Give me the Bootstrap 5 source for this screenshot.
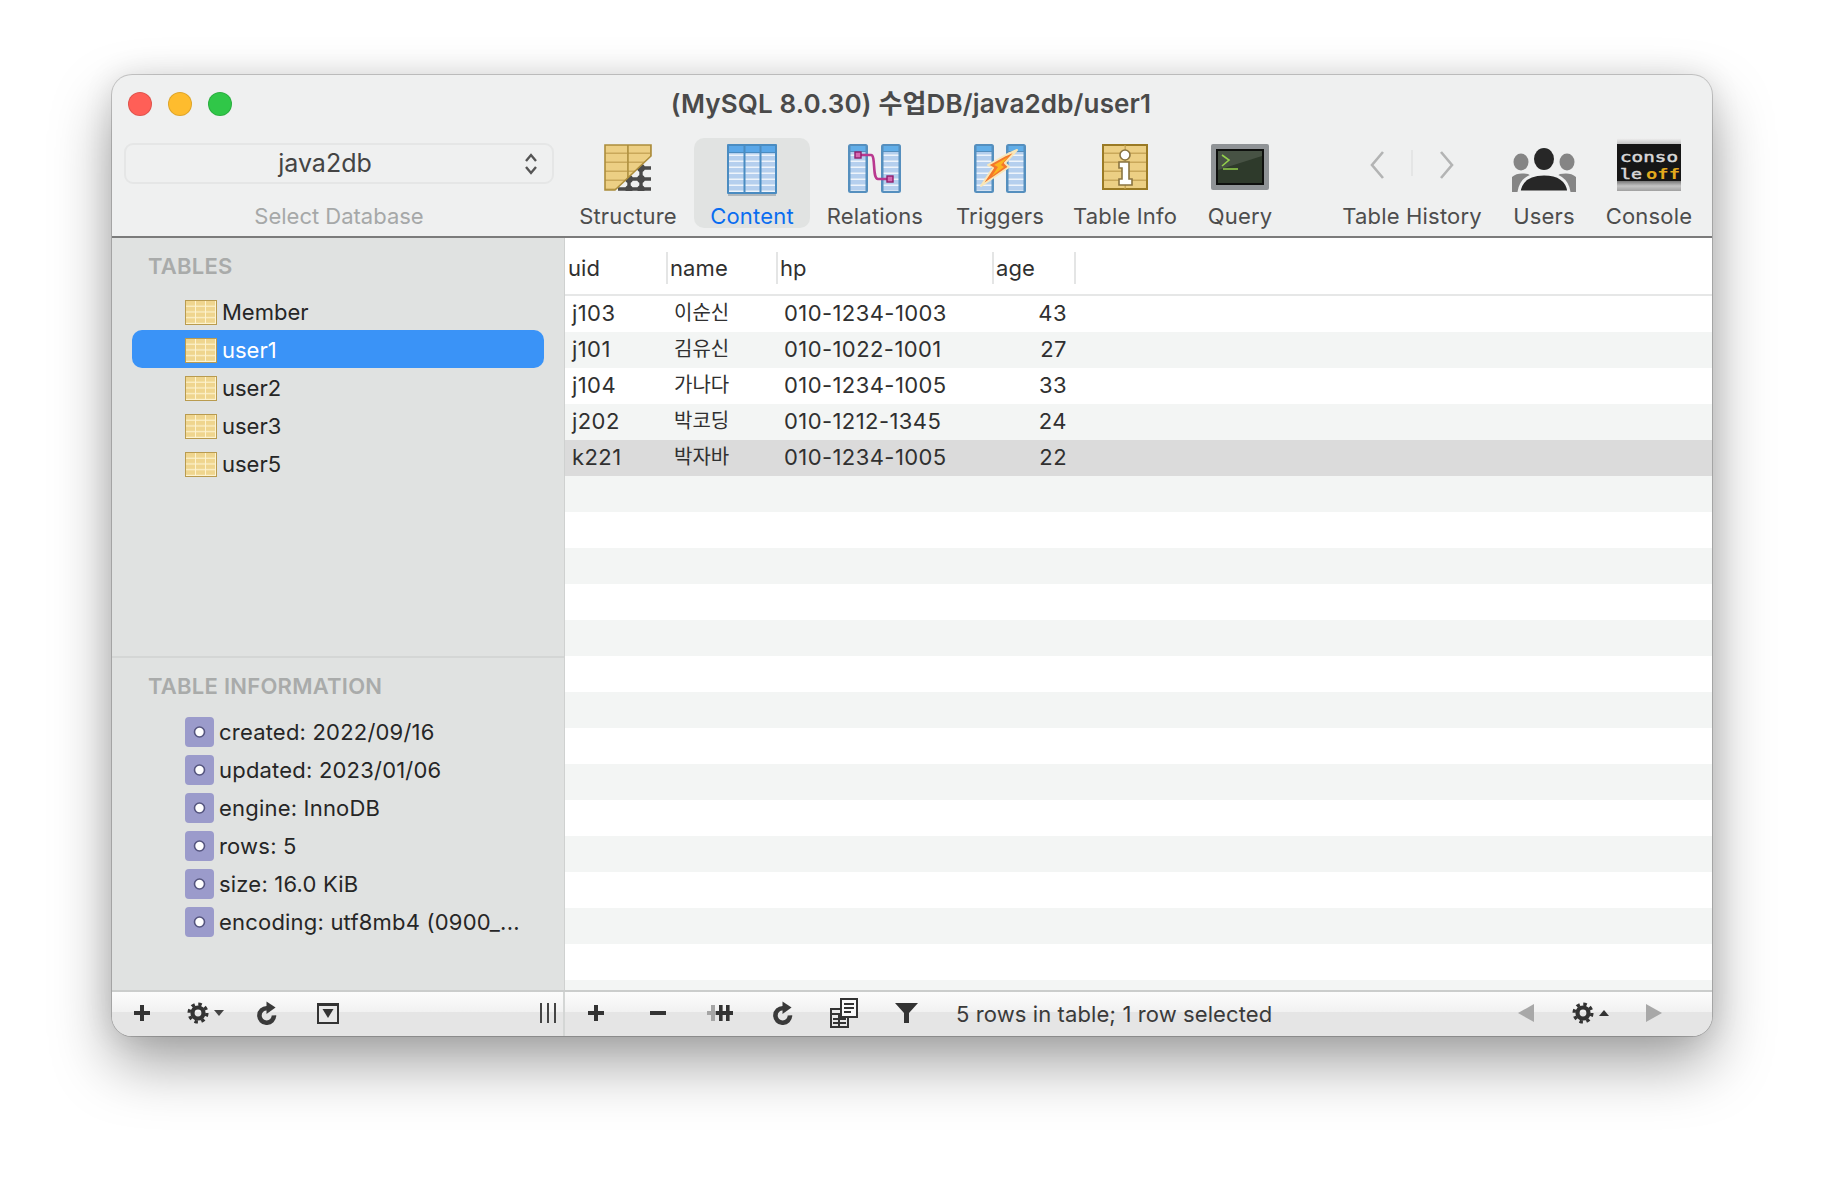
<!DOCTYPE html>
<html lang="ko">
<head>
<meta charset="UTF-8">
<title>Sequel Ace</title>
<link rel="stylesheet" href="https://cdn.jsdelivr.net/npm/bootstrap@5.3.0/dist/css/bootstrap.min.css">
<style>
  body { background: #fff; padding-top: 75px; font-family: Inter, "Noto Sans CJK KR", sans-serif; font-size: 22px; color: #262626; height: 1184px; overflow: hidden; }
  .defs-holder { display: block; width: 0; height: 0; overflow: hidden; }
  .mac-window { width: 1600px; height: 961px; border-radius: 20px; overflow: hidden; background: #eff0f0;
    box-shadow: 0 0 0 1px rgba(0,0,0,.18), 0 28px 60px rgba(0,0,0,.36), 0 0 30px rgba(0,0,0,.1); }

  .title-row { height: 63px; display: grid; grid-template-columns: 1fr auto 1fr; padding: 17px 18px 0 16px; }
  .light-row { gap: 16px; }
  .light { width: 24px; height: 24px; border-radius: 50%; border: 1px solid rgba(0,0,0,.12); }
  .light-red { background: #ff5f57; }
  .light-amber { background: #febc2e; }
  .light-green { background: #30c748; }
  .win-title { font-size: 26px; font-weight: 600; color: #4a4a4a; line-height: 30px; margin-top: -3px; letter-spacing: .14px; }

  .tool-row { height: 100px; border-bottom: 2px solid #7b7b7b; }
  .db-group { width: 453px; padding-left: 12px; flex: none; }
  .db-popup { width: 430px; height: 41px; margin-top: 5px; padding: 0 14px 0 0; border: 2px solid #e5e6e6; border-radius: 9px; font-size: 25px; color: #444; line-height: 1; --bs-btn-active-border-color: #e5e6e6; --bs-btn-hover-border-color: #e5e6e6; }
  .db-caption { width: 430px; text-align: center; margin-top: 18px; color: #a6a8a8; line-height: 28px; }
  .tool-cell { height: 90px; width: 116px; margin-right: 8px; flex: none; color: #4d4d4d; }
  .tool-cell .icon-box { height: 64px; flex: none; display: flex; align-items: flex-start; padding-top: 6px; }
  .tool-cell .tool-name { line-height: 28px; flex: none; white-space: nowrap; letter-spacing: .18px; }
  .tool-on { background: #e1e3e2; border-radius: 10px; color: #0a6df0; }
  .first-tool { margin-left: 5px; }
  .rel-cell { margin-left: -1px; margin-right: 9px; }
  .info-cell { margin-left: 1px; }
  .query-cell { width: 98px; margin-right: 0; }
  .hist-cell { width: 160px; margin-left: 43px; margin-right: 12px; }
  .users-cell { width: 80px; margin-right: 15px; }
  .console-cell { width: 100px; margin-right: 0; }
  .hist-cell .icon-box { padding-top: 12px; gap: 26px; }
  .users-cell .icon-box { padding-top: 10px; }
  .console-cell .icon-box { padding-top: 0; }
  .hist-sep { width: 2px; height: 26px; background: #e4e5e5; }

  .main-row { height: 752px; }
  .side-pane { width: 453px; flex: none; background: #e0e2e1; border-right: 1px solid #cfd1d0; }
  .side-title { font-size: 22px; font-weight: 600; color: #a9abaa; line-height: 28px; padding-left: 36px; margin: 0; letter-spacing: .25px; }
  .side-top { flex: 1 1 auto; padding-top: 14px; }
  .side-top .side-title { margin-bottom: 12px; }
  .side-bottom { border-top: 2px solid #d4d6d5; padding: 14px 0 49px; }
  .side-bottom .side-title { margin-bottom: 13px; }
  .side-list { --bs-list-group-bg: transparent; --bs-list-group-border-width: 0; --bs-list-group-color: #262626; --bs-list-group-active-bg: #3a93f7; --bs-list-group-active-color: #fff; --bs-list-group-item-padding-x: 0; --bs-list-group-item-padding-y: 0; --bs-list-group-border-radius: 0; }
  .side-list .list-group-item { height: 38px; line-height: 38px; margin: 0 20px; padding-left: 53px; padding-top: 2px; gap: 5px; display: flex; align-items: center; white-space: nowrap; }
  .side-list .list-group-item.active { border-radius: 10px; margin-top: 0; }
  .info-list .list-group-item { padding-top: 0; letter-spacing: .2px; }

  .grid-pane { flex: 1 1 auto; min-width: 0; background: #fff; overflow: hidden; }
  .grid-table { table-layout: fixed; width: 100%; margin: 0; --bs-table-bg: #fff; --bs-table-color: #303030; }
  .grid-table th, .grid-table td { height: 36px; padding: 0 9px 2px 7px; border: 0; font-weight: 400; line-height: 34px; white-space: nowrap; vertical-align: middle; letter-spacing: .42px; }
  .grid-table td.ko-cell { font-size: 20px; letter-spacing: 0; padding-left: 6px; }
  .grid-table td.hp-cell { padding-left: 6px; }
  .grid-table thead th { height: 57px; padding: 14px 3px 0; vertical-align: top; border-bottom: 2px solid #e6e7e7; box-shadow: none; letter-spacing: .1px; }
  .grid-table thead th + th { padding-left: 2px; }
  .grid-table thead .col-sep { display: block; height: 32px; line-height: 32px; border-right: 2px solid #e4e5e5; margin-right: -3px; }
  .grid-table tbody tr:nth-child(even) { --bs-table-bg: #f3f5f4; }
  .grid-table tbody tr.row-picked { --bs-table-bg: #dbdbdb; }
  .grid-c1 { width: 103px; }
  .grid-c2 { width: 110px; }
  .grid-c3 { width: 216px; }
  .grid-c4 { width: 82px; }

  .foot-row { height: 46px; border-top: 2px solid #cbcdcc; background: linear-gradient(#fcfcfc, #f1f1f1 46%, #e5e5e5 46%); }
  .foot-left { width: 453px; flex: none; border-right: 2px solid #d4d6d5; }
  .foot-shift { margin-left: -1px; }
  .foot-gear { padding-left: 2px; }
  .foot-cell { width: 62px; height: 42px; flex: none; display: flex; align-items: center; justify-content: center; }
  .foot-cell-wide { width: 64px; }
  .foot-status { margin-left: 19px; color: #3a3a3a; line-height: 44px; white-space: nowrap; letter-spacing: .1px; }
  .foot-bars { margin-left: auto; margin-right: 3px; width: 24px; }
  .foot-caret { margin-left: 5px; }
  .foot-right-group { margin-left: auto; margin-right: 26px; }
</style>
</head>
<body class="d-flex justify-content-center align-items-start">

<svg class="defs-holder" aria-hidden="true">
  <defs>
    <pattern id="yellowCells" width="10" height="5.75" patternUnits="userSpaceOnUse" x="1" y="1">
      <rect width="10" height="5.75" fill="#fdf3cf"/>
      <rect width="9" height="4.6" fill="#efd58e"/>
    </pattern>
    <pattern id="yellowBands" width="23" height="9" patternUnits="userSpaceOnUse" x="1" y="1">
      <rect width="23" height="9" fill="#c9a85a"/>
      <rect width="22" height="7.5" fill="#eccf84"/>
    </pattern>
    <pattern id="blueRows" width="16" height="6" patternUnits="userSpaceOnUse">
      <rect width="16" height="4.2" fill="#b5cfee"/>
      <rect y="4.2" width="16" height="1.8" fill="#eef4fc"/>
    </pattern>
    <symbol id="tableMini" viewBox="0 0 32 25">
      <rect width="32" height="25" fill="#b99b4f"/>
      <rect x="1" y="1" width="30" height="23" fill="url(#yellowCells)"/>
    </symbol>
    <symbol id="infoChip" viewBox="0 0 29 30">
      <rect width="29" height="30" rx="4" fill="#9b9bcb"/>
      <circle cx="14.5" cy="15" r="5" fill="#fff" stroke="#55557f" stroke-width="1.6"/>
    </symbol>
    <symbol id="blueStrip" viewBox="0 0 20 50">
      <rect width="20" height="49" rx="2.5" fill="#558fbe"/>
      <rect x="2.5" y="2" width="15" height="5" fill="#62aee8"/>
      <rect x="2.5" y="8" width="15" height="39" fill="url(#blueRows)"/>
    </symbol>
    <symbol id="gearMark" viewBox="0 0 24 24">
      <circle cx="12" cy="12" r="6" fill="none" stroke="#333" stroke-width="4.6"/>
      <circle cx="12" cy="12" r="9.7" fill="none" stroke="#333" stroke-width="3.6" stroke-dasharray="3.8 3.82"/>
    </symbol>
    <symbol id="reloadMark" viewBox="0 0 22 25">
      <path d="M11.5 7.5A7.6 7.6 0 1 0 18.8 15" fill="none" stroke="#3a3a3a" stroke-width="4.8"/>
      <polygon points="11,.5 20.5,6.8 11,13.5" fill="#3a3a3a"/>
    </symbol>
    <symbol id="plusMark" viewBox="0 0 16 16">
      <rect y="6" width="16" height="4" fill="#333"/>
      <rect x="6" width="4" height="16" fill="#333"/>
    </symbol>
  </defs>
</svg>

<div class="mac-window d-flex flex-column">
  <div class="title-row">
    <div class="d-flex light-row"><span class="light light-red"></span><span class="light light-amber"></span><span class="light light-green"></span></div>
    <div class="win-title">(MySQL 8.0.30) 수업DB/java2db/user1</div>
    <div></div>
  </div>

  <div class="tool-row d-flex">
    <div class="db-group">
      <button type="button" class="btn db-popup d-flex align-items-center">
        <span class="flex-fill text-center">java2db</span>
        <svg width="14" height="22" viewBox="0 0 14 22"><path d="M2 8l5-6 5 6M2 14l5 6 5-6" fill="none" stroke="#555" stroke-width="2.4"/></svg>
      </button>
      <div class="db-caption">Select Database</div>
    </div>

    <div class="tool-cell first-tool d-flex flex-column align-items-center">
      <div class="icon-box">
        <svg width="48" height="47" viewBox="0 0 48 47">
          <g stroke="#4a4a4a" stroke-width="3.4" fill="#4a4a4a">
            <path d="M14 35H47M24 24H47M37 14V46M25 24V46" fill="none"/>
            <circle cx="25" cy="35" r="2.2"/><circle cx="37" cy="35" r="2.2"/><circle cx="37" cy="24" r="2.2"/><circle cx="37" cy="45" r="2"/><circle cx="25" cy="45" r="2"/>
            <path d="M14 45H47" fill="none"/>
          </g>
          <polygon points="1,1 47,1 47,12 11,46 1,46" fill="url(#yellowBands)" stroke="#ac8d3b" stroke-width="1.6"/>
          <path d="M24 1V33" stroke="#ac8d3b" stroke-width="1.4"/>
        </svg>
      </div>
      <div class="tool-name">Structure</div>
    </div>
    <div class="tool-cell tool-on d-flex flex-column align-items-center">
      <div class="icon-box">
        <svg width="52" height="52" viewBox="0 0 52 52">
          <rect x="2" y="49" width="48" height="3" fill="#8e9aa3" opacity=".6"/>
          <rect x="1" width="50" height="50" rx="1" fill="#4a8cc1"/>
          <rect x="3" y="2" width="46" height="6" fill="#5aa7e8"/>
          <rect x="3" y="9" width="46" height="39" fill="url(#blueRows)"/>
          <rect x="17.5" y="2" width="2" height="46" fill="#4a8cc1"/>
          <rect x="33.5" y="2" width="2" height="46" fill="#4a8cc1"/>
        </svg>
      </div>
      <div class="tool-name">Content</div>
    </div>
    <div class="tool-cell rel-cell d-flex flex-column align-items-center">
      <div class="icon-box">
        <svg width="54" height="50" viewBox="0 0 54 50">
          <use href="#blueStrip" width="20" height="50"/>
          <use href="#blueStrip" x="33" width="20" height="50"/>
          <path d="M10 11H23C28 11 24 35 30 35H42" fill="none" stroke="#b9388f" stroke-width="2.6"/>
          <rect x="7" y="8" width="6" height="6" fill="#d66ab2" stroke="#8e1f6d" stroke-width="1.4"/>
          <rect x="39" y="32" width="6" height="6" fill="#d66ab2" stroke="#8e1f6d" stroke-width="1.4"/>
        </svg>
      </div>
      <div class="tool-name">Relations</div>
    </div>
    <div class="tool-cell d-flex flex-column align-items-center">
      <div class="icon-box">
        <svg width="52" height="50" viewBox="0 0 52 50">
          <use href="#blueStrip" width="20" height="50"/>
          <use href="#blueStrip" x="32" width="20" height="50"/>
          <polygon points="43,6 31,19 35,23 7,42 19,24 14,21 32,11" fill="#f4772a" stroke="#f8e6b8" stroke-width="2" stroke-linejoin="round"/>
          <polygon points="34,13 27,21 30,23 18,32 24,23 20,21" fill="#fbb51f"/>
        </svg>
      </div>
      <div class="tool-name">Triggers</div>
    </div>
    <div class="tool-cell info-cell d-flex flex-column align-items-center">
      <div class="icon-box">
        <svg width="46" height="47" viewBox="0 0 46 47">
          <rect x="1" y="1" width="44" height="44" fill="url(#yellowBands)" stroke="#9a7a25" stroke-width="2"/>
          <path d="M23 1V45" stroke="#c9a85a" stroke-width="1"/>
          <circle cx="23" cy="11" r="5" fill="#fff" stroke="#8a7440" stroke-width="1.6"/>
          <path d="M17 18H27V35H30V41H17V35H20V24H17Z" fill="#fff" stroke="#8a7440" stroke-width="1.6"/>
        </svg>
      </div>
      <div class="tool-name">Table Info</div>
    </div>
    <div class="tool-cell query-cell d-flex flex-column align-items-center">
      <div class="icon-box">
        <svg width="58" height="47" viewBox="0 0 58 47">
          <rect width="58" height="46" rx="2" fill="#8f9396"/>
          <rect x="5" y="5" width="48" height="36" fill="#0e100e"/>
          <rect x="7" y="7" width="44" height="32" fill="#2e3a2b"/>
          <polygon points="7,7 51,7 51,12 7,26" fill="#475244"/>
          <path d="M11 11l7 5-7 6M12 25H27" fill="none" stroke="#93cf4b" stroke-width="1.6"/>
        </svg>
      </div>
      <div class="tool-name">Query</div>
    </div>
    <div class="tool-cell hist-cell d-flex flex-column align-items-center">
      <div class="icon-box">
        <svg width="16" height="30" viewBox="0 0 16 30"><path d="M14 2L3 15l11 13" fill="none" stroke="#b3b4b4" stroke-width="2.6"/></svg>
        <span class="hist-sep"></span>
        <svg width="16" height="30" viewBox="0 0 16 30"><path d="M2 2l11 13L2 28" fill="none" stroke="#b3b4b4" stroke-width="2.6"/></svg>
      </div>
      <div class="tool-name">Table History</div>
    </div>
    <div class="tool-cell users-cell d-flex flex-column align-items-center">
      <div class="icon-box">
        <svg width="64" height="44" viewBox="0 0 64 44">
          <ellipse cx="9" cy="14" rx="7.5" ry="8.5" fill="#858585"/>
          <ellipse cx="55" cy="14" rx="7.5" ry="8.5" fill="#858585"/>
          <path d="M0 44V29C4 25 10 25 16 26L22 30 42 30 48 26C54 25 60 25 64 29V44Z" fill="#858585"/>
          <path d="M7 44C9 30 20 26 32 26S55 30 57 44Z" fill="#272727" stroke="#eff0f0" stroke-width="3"/>
          <ellipse cx="32" cy="11" rx="10" ry="11" fill="#272727"/>
        </svg>
      </div>
      <div class="tool-name">Users</div>
    </div>
    <div class="tool-cell console-cell d-flex flex-column align-items-center">
      <div class="icon-box">
        <svg width="64" height="54" viewBox="0 0 64 54">
          <defs>
            <linearGradient id="metalTop" x1="0" y1="0" x2="0" y2="1"><stop offset="0" stop-color="#f2f2f2"/><stop offset="1" stop-color="#bdbdbd"/></linearGradient>
            <linearGradient id="metalLow" x1="0" y1="0" x2="0" y2="1"><stop offset="0" stop-color="#777"/><stop offset=".5" stop-color="#c4c4c4"/><stop offset="1" stop-color="#a0a0a0"/></linearGradient>
          </defs>
          <rect width="64" height="7" fill="url(#metalTop)"/>
          <rect y="6" width="64" height="37" fill="#161616"/>
          <rect y="43" width="64" height="10" fill="url(#metalLow)"/>
          <text x="3" y="24" font-family="DejaVu Sans Mono, monospace" font-size="14.5" fill="#d8d8d8" stroke="#d8d8d8" stroke-width=".5" textLength="58" lengthAdjust="spacingAndGlyphs">conso</text>
          <text x="3" y="41" font-family="DejaVu Sans Mono, monospace" font-size="14.5" fill="#d8d8d8" stroke="#d8d8d8" stroke-width=".5" textLength="22" lengthAdjust="spacingAndGlyphs">le</text>
          <text x="29" y="41" font-family="DejaVu Sans Mono, monospace" font-size="14.5" font-weight="700" fill="#e3aa1e" textLength="34" lengthAdjust="spacingAndGlyphs">off</text>
        </svg>
      </div>
      <div class="tool-name">Console</div>
    </div>
  </div>

  <div class="main-row d-flex">
    <aside class="side-pane d-flex flex-column">
      <div class="side-top">
        <h6 class="side-title">TABLES</h6>
        <div class="list-group side-list">
          <div class="list-group-item"><svg width="32" height="25"><use href="#tableMini"/></svg>Member</div>
          <div class="list-group-item active"><svg width="32" height="25"><use href="#tableMini"/></svg>user1</div>
          <div class="list-group-item"><svg width="32" height="25"><use href="#tableMini"/></svg>user2</div>
          <div class="list-group-item"><svg width="32" height="25"><use href="#tableMini"/></svg>user3</div>
          <div class="list-group-item"><svg width="32" height="25"><use href="#tableMini"/></svg>user5</div>
        </div>
      </div>
      <div class="side-bottom">
        <h6 class="side-title">TABLE INFORMATION</h6>
        <div class="list-group side-list info-list">
          <div class="list-group-item"><svg width="29" height="30"><use href="#infoChip"/></svg>created: 2022/09/16</div>
          <div class="list-group-item"><svg width="29" height="30"><use href="#infoChip"/></svg>updated: 2023/01/06</div>
          <div class="list-group-item"><svg width="29" height="30"><use href="#infoChip"/></svg>engine: InnoDB</div>
          <div class="list-group-item"><svg width="29" height="30"><use href="#infoChip"/></svg>rows: 5</div>
          <div class="list-group-item"><svg width="29" height="30"><use href="#infoChip"/></svg>size: 16.0 KiB</div>
          <div class="list-group-item"><svg width="29" height="30"><use href="#infoChip"/></svg>encoding: utf8mb4 (0900_...</div>
        </div>
      </div>
    </aside>

    <div class="grid-pane">
      <table class="table grid-table">
        <colgroup><col class="grid-c1"><col class="grid-c2"><col class="grid-c3"><col class="grid-c4"><col></colgroup>
        <thead>
          <tr><th><span class="col-sep">uid</span></th><th><span class="col-sep">name</span></th><th><span class="col-sep">hp</span></th><th><span class="col-sep">age</span></th><th></th></tr>
        </thead>
        <tbody>
          <tr><td>j103</td><td class="ko-cell">이순신</td><td class="hp-cell">010-1234-1003</td><td class="text-end">43</td><td></td></tr>
          <tr><td>j101</td><td class="ko-cell">김유신</td><td class="hp-cell">010-1022-1001</td><td class="text-end">27</td><td></td></tr>
          <tr><td>j104</td><td class="ko-cell">가나다</td><td class="hp-cell">010-1234-1005</td><td class="text-end">33</td><td></td></tr>
          <tr><td>j202</td><td class="ko-cell">박코딩</td><td class="hp-cell">010-1212-1345</td><td class="text-end">24</td><td></td></tr>
          <tr class="row-picked"><td>k221</td><td class="ko-cell">박자바</td><td class="hp-cell">010-1234-1005</td><td class="text-end">22</td><td></td></tr>
          <tr><td colspan="5"></td></tr>
          <tr><td colspan="5"></td></tr>
          <tr><td colspan="5"></td></tr>
          <tr><td colspan="5"></td></tr>
          <tr><td colspan="5"></td></tr>
          <tr><td colspan="5"></td></tr>
          <tr><td colspan="5"></td></tr>
          <tr><td colspan="5"></td></tr>
          <tr><td colspan="5"></td></tr>
          <tr><td colspan="5"></td></tr>
          <tr><td colspan="5"></td></tr>
          <tr><td colspan="5"></td></tr>
          <tr><td colspan="5"></td></tr>
          <tr><td colspan="5"></td></tr>
          <tr><td colspan="5"></td></tr>
        </tbody>
      </table>
    </div>
  </div>

  <div class="foot-row d-flex">
    <div class="foot-left d-flex">
      <span class="foot-cell foot-shift"><svg width="16" height="16"><use href="#plusMark"/></svg></span>
      <span class="foot-cell foot-gear">
        <svg width="22" height="22"><use href="#gearMark"/></svg>
        <svg class="foot-caret" width="10" height="6" viewBox="0 0 10 6"><polygon points="0,0 10,0 5,6" fill="#444"/></svg>
      </span>
      <span class="foot-cell"><svg width="21" height="24"><use href="#reloadMark"/></svg></span>
      <span class="foot-cell">
        <svg width="22" height="21" viewBox="0 0 22 21"><rect x="1" y="2" width="20" height="18" fill="#e8e8e8" stroke="#333" stroke-width="2"/><rect width="22" height="3" fill="#333"/><polygon points="5.5,6 16.5,6 11,15" fill="#333"/></svg>
      </span>
      <span class="foot-cell foot-bars">
        <svg width="16" height="20" viewBox="0 0 16 20"><path d="M1 0V20M8 0V20M15 0V20" stroke="#444" stroke-width="2"/></svg>
      </span>
    </div>
    <div class="d-flex flex-fill">
      <span class="foot-cell"><svg width="16" height="16"><use href="#plusMark"/></svg></span>
      <span class="foot-cell"><svg width="16" height="4" viewBox="0 0 16 4"><rect width="16" height="4" fill="#333"/></svg></span>
      <span class="foot-cell">
        <svg width="26" height="16" viewBox="0 0 26 16"><rect y="6" width="10" height="4" fill="#a5a5a5"/><rect x="4" width="4" height="16" fill="#a5a5a5"/><rect x="9" y="6" width="17" height="4" fill="#333"/><rect x="12" width="3.6" height="16" fill="#333"/><rect x="19" width="3.6" height="16" fill="#333"/></svg>
      </span>
      <span class="foot-cell"><svg width="21" height="24"><use href="#reloadMark"/></svg></span>
      <span class="foot-cell">
        <svg width="28" height="30" viewBox="0 0 28 30">
          <rect x="1" y="11" width="17" height="18" fill="#e8e8e8" stroke="#333" stroke-width="2"/>
          <path d="M1 16H18M3 21H16M3 25H16M9 16V29" stroke="#333" stroke-width="2"/>
          <rect x="11" y="1" width="16" height="18" fill="#fafafa" stroke="#333" stroke-width="2"/>
          <path d="M14 6H24M14 10H24M14 14H21" stroke="#333" stroke-width="2"/>
        </svg>
      </span>
      <span class="foot-cell"><svg width="23" height="20" viewBox="0 0 23 20"><polygon points="0,0 23,0 14,10 14,20 9,20 9,10" fill="#333"/></svg></span>
      <span class="foot-status">5 rows in table; 1 row selected</span>
      <div class="foot-right-group d-flex">
        <span class="foot-cell foot-cell-wide"><svg width="16" height="18" viewBox="0 0 16 18"><polygon points="16,0 16,18 0,9" fill="#a8a8a8"/></svg></span>
        <span class="foot-cell foot-cell-wide">
          <svg width="22" height="22"><use href="#gearMark"/></svg>
          <svg class="foot-caret" width="10" height="6" viewBox="0 0 10 6"><polygon points="0,6 10,6 5,0" fill="#333"/></svg>
        </span>
        <span class="foot-cell foot-cell-wide"><svg width="16" height="18" viewBox="0 0 16 18"><polygon points="0,0 0,18 16,9" fill="#a8a8a8"/></svg></span>
      </div>
    </div>
  </div>
</div>
</body>
</html>
